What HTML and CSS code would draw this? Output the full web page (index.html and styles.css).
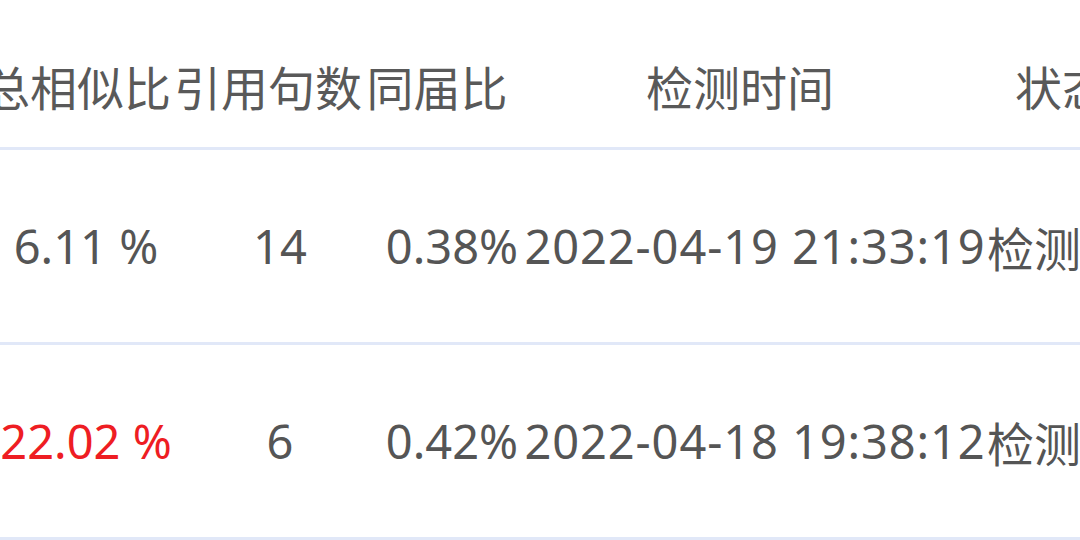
FILE: index.html
```html
<!DOCTYPE html>
<html lang="zh-CN">
<head>
<meta charset="utf-8">
<link rel="stylesheet" href="styles.css">
</head>
<body>
<div class="table">
  <div class="head">
    <div class="cell">总相似比</div>
    <div class="cell">引用句数</div>
    <div class="cell">同届比</div>
    <div class="cell">检测时间</div>
    <div class="cell">状态</div>
  </div>
  <div class="row">
    <div class="cell">6.11 %</div>
    <div class="cell">14</div>
    <div class="cell">0.38%</div>
    <div class="cell time">2022-04-19 21:33:19</div>
    <div class="cell">检测完成</div>
  </div>
  <div class="row">
    <div class="cell danger">22.02 %</div>
    <div class="cell">6</div>
    <div class="cell">0.42%</div>
    <div class="cell time">2022-04-18 19:38:12</div>
    <div class="cell">检测完成</div>
  </div>
</div>
</body>
</html>
```
FILE: styles.css
```css
html, body {
  margin: 0;
  padding: 0;
  background: #ffffff;
  overflow: hidden;
}

.table {
  width: 1180px;
  margin-left: -6px;
  font-family: "Noto Sans", "Noto Sans CJK SC", sans-serif;
  font-size: 47px;
  color: #555555;
}

.head,
.row {
  display: grid;
  border-bottom: 3px solid #e1e8f8;
}

.head {
  grid-template-columns: 166px 216px 122px 484px 160px;
  height: 124px;
  padding-top: 23px;
  color: #595959;
}

.row {
  grid-template-columns: 184px 204px 140px 466px 186px;
  height: 192px;
}

.cell {
  display: flex;
  align-items: center;
  justify-content: center;
  white-space: nowrap;
  min-width: 0;
}

.time {
  letter-spacing: 0.9px;
}

.danger {
  color: #ee1d23;
}
```
